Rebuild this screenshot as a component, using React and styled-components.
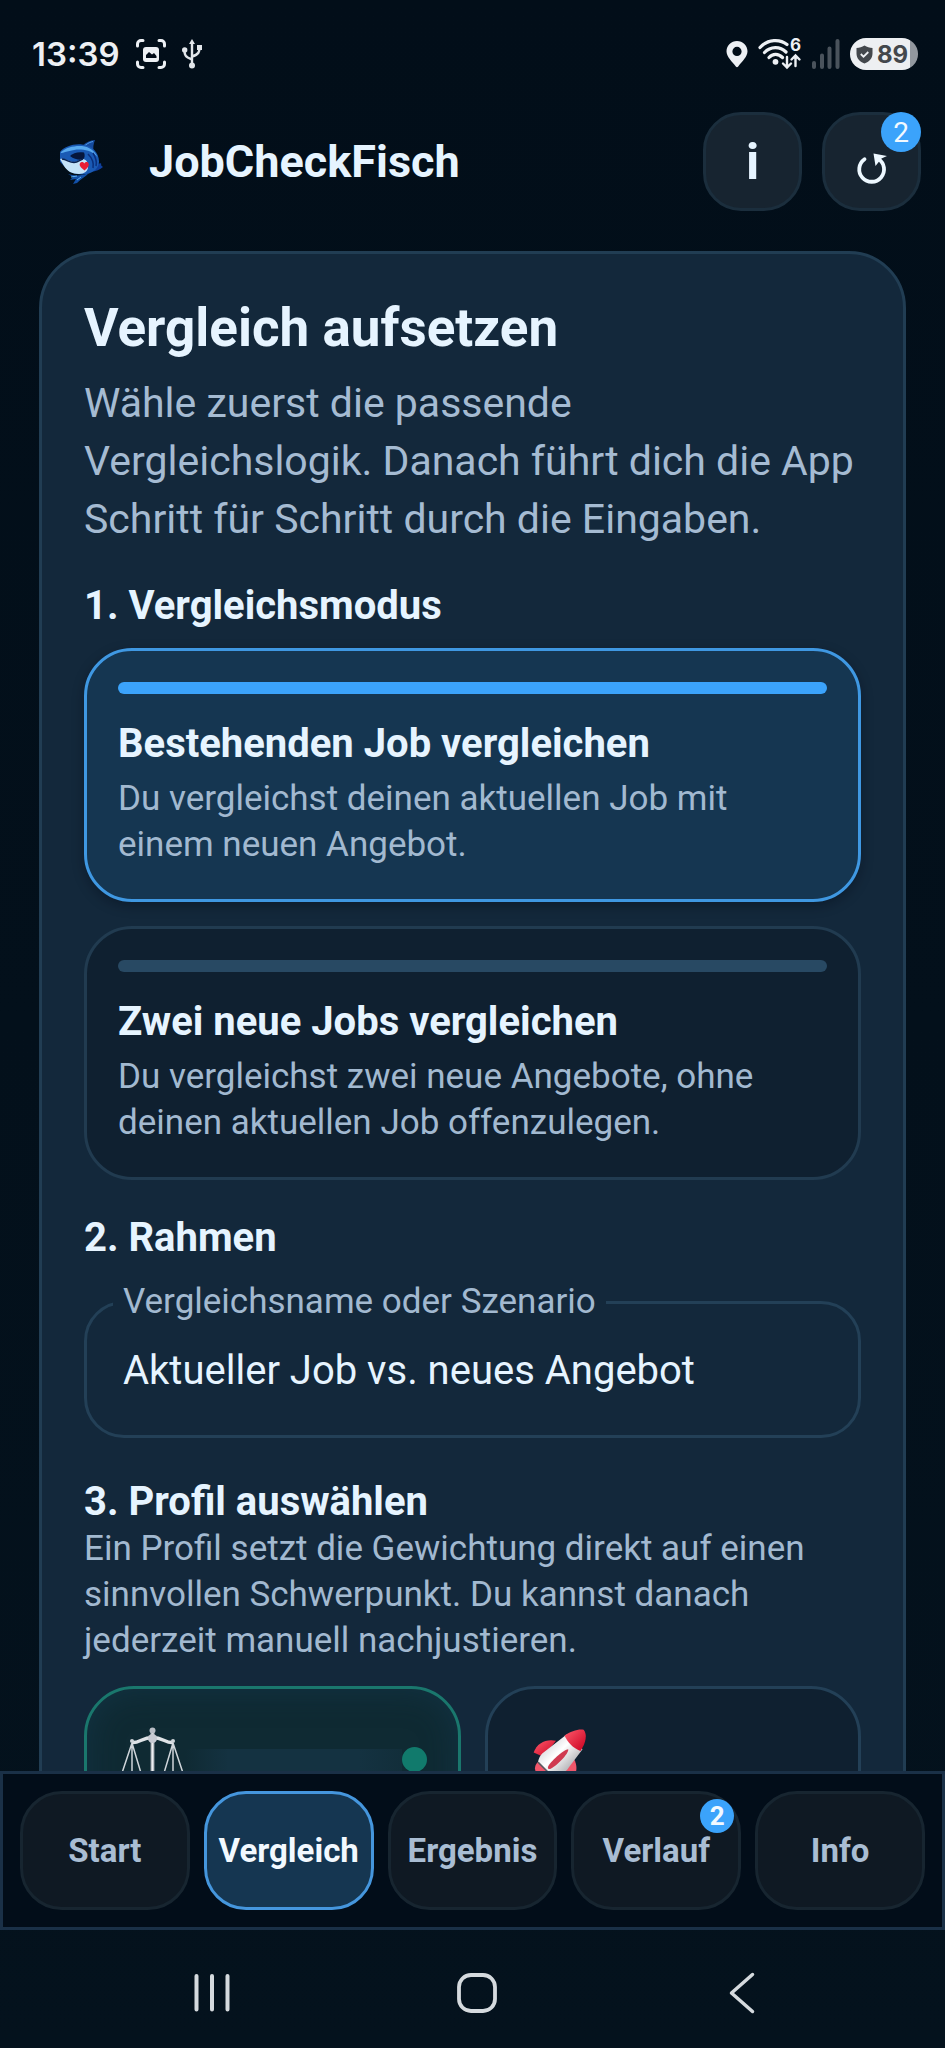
import { useState } from "react";
import styled, { createGlobalStyle } from "styled-components";

const GlobalStyle = createGlobalStyle`
* {
  margin: 0;
  padding: 0;
  box-sizing: border-box;
}

body {
  background-color: #020d19;
  color: #e6f4ff;
  font-family: Roboto, "Noto Sans", sans-serif;
}

button, input {
  font-family: inherit;
  color: inherit;
}
`;

const Screen = styled.div`
  display: flex;
  flex-direction: column;
  height: 100vh;
  background: linear-gradient(#020e19, #04121d);
`;

const StatusBar = styled.div`
  display: flex;
  justify-content: space-between;
  align-items: center;
  height: 108px;
  flex: none;
  padding: 0 27px 0 32px;
  font-family: Inter, sans-serif;
  color: #edf0f4;
`;

const StatusGroup = styled.div`
  display: flex;
  align-items: center;
  gap: ${(props) => props.$gap};
`;

const Clock = styled.span`
  font-size: 33px;
  font-weight: 600;
`;

const Battery = styled.span`
  display: flex;
  align-items: center;
  justify-content: center;
  gap: 4px;
  width: 68px;
  height: 32px;
  padding-right: 4px;
  border-radius: 16px;
  background: linear-gradient(90deg, #edeff2 60px, #92989f 60px);
  color: #43474c;
  font-size: 24px;
  font-weight: 700;
`;

const Header = styled.header`
  display: flex;
  align-items: center;
  gap: 20px;
  flex: none;
  padding: 4px 24px 40px 59px;
`;

const AppName = styled.h1`
  flex: 1;
  margin-left: 25px;
  font-size: 45px;
  line-height: 56px;
  font-weight: 700;
`;

const RoundButton = styled.button`
  position: relative;
  display: flex;
  align-items: center;
  justify-content: center;
  width: 99px;
  height: 99px;
  border: 3px solid #1b2e3d;
  border-radius: 38px;
  background-color: #172430;
  font-size: 50px;
  font-weight: 700;
  cursor: pointer;
`;

const Badge = styled.span`
  position: absolute;
  top: ${(props) => (props.$small ? "5px" : "-3px")};
  right: ${(props) => (props.$small ? "4px" : "-3px")};
  display: flex;
  align-items: center;
  justify-content: center;
  width: ${(props) => (props.$small ? "34px" : "40px")};
  height: ${(props) => (props.$small ? "34px" : "40px")};
  border-radius: 50%;
  background-color: #3ba3fb;
  color: #f2f9ff;
  font-size: ${(props) => (props.$small ? "26px" : "28px")};
  font-weight: ${(props) => (props.$small ? 700 : 400)};
`;

const Content = styled.main`
  flex: 1;
  min-height: 0;
  overflow: hidden;
  padding: 0 39px;
`;

const Panel = styled.section`
  padding: 43px 42px;
  border: 3px solid #213d53;
  border-radius: 57px;
  background-color: #13283b;
`;

const Title = styled.h2`
  font-size: 53px;
  line-height: 62px;
  font-weight: 700;
`;

const Lead = styled.p`
  margin-top: 15px;
  color: #a5bbd2;
  font-size: 41px;
  line-height: 58px;
`;

const SectionTitle = styled.h3`
  margin-top: ${(props) => props.$space || "34px"};
  font-size: 40px;
  line-height: 48px;
  font-weight: 700;
`;

const Hint = styled.span`
  display: block;
  color: #a2b9d0;
  font-size: 35px;
  line-height: 46px;
`;

const OptionList = styled.div`
  display: flex;
  flex-direction: column;
  gap: 24px;
  margin-top: 18px;
`;

const OptionCard = styled.button`
  display: block;
  width: 100%;
  padding: 31px;
  border: 3px solid ${(props) => (props.$active ? "#3f98e2" : "#213b50")};
  border-radius: 48px;
  background-color: ${(props) => (props.$active ? "#153651" : "#0f2030")};
  box-shadow: ${(props) =>
    props.$active ? "0 4px 12px rgba(0, 10, 20, 0.35)" : "none"};
  text-align: left;
  cursor: pointer;
`;

const OptionBar = styled.span`
  display: block;
  height: 12px;
  border-radius: 6px;
  background-color: ${(props) => (props.$active ? "#3ba3fb" : "#284963")};
`;

const OptionTitle = styled.span`
  display: block;
  margin: 26px 0 8px;
  font-size: 40px;
  line-height: 48px;
  font-weight: 700;
`;

const Field = styled.fieldset`
  margin-top: 18px;
  padding: 0 36px 19px 26px;
  border: 3px solid #234057;
  border-radius: 40px;
`;

const FieldLabel = styled.legend`
  padding: 0 10px;
  color: #a2b9d0;
  font-size: 35px;
  line-height: 44px;
`;

const FieldInput = styled.input`
  display: block;
  width: 100%;
  height: 92px;
  padding: 0 10px;
  border: 0;
  outline: 0;
  background: none;
  font-size: 40px;
`;

const ProfileGrid = styled.div`
  display: grid;
  grid-template-columns: 1fr 1fr;
  gap: 24px;
  margin-top: 22px;
`;

const ProfileCard = styled.button`
  display: flex;
  align-items: flex-start;
  justify-content: space-between;
  height: 280px;
  padding: 38px 31px 38px 34px;
  border: 3px solid ${(props) => (props.$active ? "#1a776d" : "#234057")};
  border-radius: 50px;
  background-color: ${(props) => (props.$active ? "#0f2a33" : "#0f2030")};
  box-shadow: ${(props) =>
    props.$active ? "inset 0 0 32px rgba(22, 60, 84, 0.5)" : "none"};
  cursor: pointer;
`;

const Sheen = styled.span`
  flex: 1;
  align-self: stretch;
  margin-top: 22px;
  background: linear-gradient(90deg, #0f2a33, #143241 20%, #143241 80%, #122e3a);
`;

const Dot = styled.span`
  width: 25px;
  height: 25px;
  margin-top: 20px;
  border-radius: 50%;
  background-color: #117a6c;
`;

const TabBar = styled.nav`
  display: grid;
  grid-template-columns: repeat(5, 1fr);
  gap: 14px;
  flex: none;
  padding: 17px;
  border: 3px solid #1a3047;
  background-color: #020d19;
`;

const Tab = styled.button`
  position: relative;
  height: 119px;
  border: 3px solid ${(props) => (props.$active ? "#4596dd" : "#172530")};
  border-radius: 42px;
  background-color: ${(props) => (props.$active ? "#153651" : "#0f1923")};
  color: ${(props) => (props.$active ? "#f2f9ff" : "#a9bdd3")};
  font-size: 33px;
  font-weight: 700;
  cursor: pointer;
`;

const SystemBar = styled.div`
  display: grid;
  grid-template-columns: repeat(3, 265px);
  justify-content: center;
  justify-items: center;
  align-items: center;
  flex: none;
  height: 118px;
  padding: 8px 0 0 8px;
`;

const SystemButton = styled.button`
  display: flex;
  border: 0;
  background: none;
  cursor: pointer;
`;

const ScreenshotIcon = () => (
  <svg width="32" height="32" viewBox="0 0 32 32" fill="none" stroke="#edf0f4" strokeWidth="3" strokeLinecap="round">
    <path d="M2.500 8V6a3.500 3.500 0 0 1 3.500-3.500h2M24 2.500h2A3.500 3.500 0 0 1 29.500 6v2M29.500 24v2a3.500 3.500 0 0 1-3.500 3.500h-2M8 29.500H6A3.500 3.500 0 0 1 2.500 26v-2" />
    <rect x="8" y="9" width="16" height="15" rx="3" fill="#edf0f4" stroke="none" />
    <path d="M11 20v-3l3-3 3 2.500 2-1.500 2.500 3V20z" fill="#020c18" stroke="none" />
  </svg>
);

const UsbIcon = () => (
  <svg width="20" height="30" viewBox="1 0 20 30" fill="none" stroke="#e2e6ea" strokeWidth="2.400">
    <path d="M11 4v22M11 20.500C4 18 3.500 16 3.500 11M11 17.500c7-2 7.500-5 7.500-9" />
    <path d="M11 0l3 5H8z" fill="#e2e6ea" stroke="none" />
    <circle cx="3.700" cy="11" r="2.700" fill="#e2e6ea" stroke="none" />
    <rect x="16" y="6" width="5" height="5" fill="#e2e6ea" stroke="none" />
    <circle cx="11" cy="26.500" r="3" fill="#e2e6ea" stroke="none" />
  </svg>
);

const PinIcon = () => (
  <svg width="22" height="28" viewBox="0 0 22 28">
    <path fillRule="evenodd" fill="#edf0f4" d="M11 1C5.300 1 .5 5.500.5 11.300.5 17 6 21.500 9.800 26.500q1.200 1.400 2.400 0C16 21.500 21.500 17 21.500 11.300 21.500 5.500 16.700 1 11 1zm0 5.800a4.600 4.600 0 1 1 0 9.200 4.600 4.600 0 0 1 0-9.200z" />
  </svg>
);

const WifiIcon = () => (
  <svg width="44" height="48" viewBox="0 -8 44 48" fill="none" stroke="#edf0f4" strokeWidth="3.200" strokeLinecap="round">
    <path d="M2 9.500C10 .8 22 .8 29 6.500M6.500 14.500c6-6.500 15.500-6.500 21.500-.5M11 19.500c4-4.500 9.500-4 13.500 0" />
    <circle cx="17.500" cy="23.800" r="2.900" fill="#edf0f4" stroke="none" />
    <path d="M29 19v9M25 25.500l4 4 4-4M37.500 28v-9M33.500 21.500l4-4 4 4" strokeWidth="2.400" />
    <text x="32" y="13" fill="#edf0f4" stroke="none" fontSize="17" fontWeight="700">6</text>
  </svg>
);

const SignalIcon = () => (
  <svg width="28" height="30" viewBox="0 0 28 30" stroke="#4a535c" strokeWidth="4" strokeLinecap="round">
    <path d="M2 24v4M10 16.500V28M17.500 9.500V28M25.500 2v26" />
  </svg>
);

const ShieldIcon = () => (
  <svg width="17" height="19" viewBox="0 0 17 19">
    <path d="M8.500.5c2.500 1.600 5 2.300 8 2.500v5.500c0 5-3.500 8.500-8 10-4.500-1.500-8-5-8-10V3c3-.2 5.500-.9 8-2.500z" fill="#43474c" />
    <path d="M4.800 9l2.700 2.700 4.800-4.700" fill="none" stroke="#edeff2" strokeWidth="1.800" />
  </svg>
);

const SharkLogo = () => (
  <svg width="45" height="46" viewBox="0 0 45 46">
    <path d="M23 7C27 3 31 1.500 36 1c-1.500 4-2.500 8-1 12z" fill="#154a9c" />
    <path d="M26 6.500c3-2.500 5.500-3.500 8-4" stroke="#4f9be8" strokeWidth="1" fill="none" />
    <path d="M35 27c4-1.500 6-3.500 7-2.500.8 1-1 1.500 2 3.500-3 2.500-8 5-13 4.500z" fill="#0f3f9c" />
    <path d="M1 13c4-5 13-8.500 22-7.500 10 1 17 8 17 17 0 6-5 11-12 12.500-8 1.500-17-.5-22-7-3-4-5.500-4-5-7.500z" fill="#1a5ab4" />
    <path d="M2 13c5-4.500 13-6.500 21-6 8 .8 13 5.500 15.500 11C34 13 29 11 22 10.500 14 10 8 13 2 14z" fill="#57a9ee" />
    <path d="M11 17c3-3 8-4.500 14-3.500 1 2.500 1 5-1 7-4 .5-9 0-13-3.500z" fill="#06163c" />
    <path d="M1 20c5-1.500 8 2.500 13 3 3.500.2 6-1.500 9-3 5 0 6 4 6 8 0 4-3.500 7-9 7-7 0-12-3-15-8z" fill="#c4e3f8" />
    <path d="M3 20c5 .5 7 3.500 12 3.500 4 0 6.500-3 9-3.500" fill="none" stroke="#0b2350" strokeWidth="1.300" />
    <path d="M25.500 31.500c-4-3-5.500-5-4.500-7.200 1-1.700 3.200-1.500 4.300.2 1.200-1.800 3.500-1.900 4.300 0 .8 2.200-.6 4.300-4.100 7z" fill="#ea1c34" />
    <path d="M29 15c4 4 6 9 5 14M34 14c3 5 4 9 3 13" stroke="#0a2f7c" strokeWidth="1.500" fill="none" />
    <path d="M9 35c6 2 14 2 21-1-4 4-8 6-12 10l-4 1 3-5-6 1 3-3z" fill="#1250a8" />
    <path d="M12 38l6-1M18 41l4-3" stroke="#5fb0ee" strokeWidth="1" />
  </svg>
);

const RestoreIcon = () => (
  <svg width="34" height="46" viewBox="0 -12 34 46" fill="none" stroke="#edf8ff" strokeWidth="3.800">
    <path d="M9.500 8.200A12.400 12.400 0 1 0 23.500 8" strokeLinecap="round" />
    <path d="M18.500 2.500l13.500 2.500-5.500 2.500L20.500 15z" fill="#edf8ff" stroke="none" />
  </svg>
);

const ScalesIcon = () => (
  <svg width="64" height="64" viewBox="0 0 64 64" fill="none" stroke="#cfd5da" strokeWidth="1.500">
    <defs>
      <linearGradient id="metal">
        <stop offset="0" stopColor="#8f979e" />
        <stop offset="0.500" stopColor="#eef0f2" />
        <stop offset="1" stopColor="#8f979e" />
      </linearGradient>
    </defs>
    <path d="M11 16L1 46M11 16v30M11 16l9 30M52 16l-9 30M52 16v30M52 16l10 30" />
    <path d="M11 15.500c7 1 10-5 20.500-5s13.500 6 20.500 5" stroke="#dfe3e7" strokeWidth="3.500" />
    <rect x="29.500" y="6" width="4" height="54" fill="url(#metal)" stroke="none" />
    <circle cx="31.500" cy="3.500" r="3" fill="#b9bec6" stroke="none" />
    <circle cx="31.500" cy="11.500" r="4.500" fill="#c7cad2" stroke="none" />
    <circle cx="11" cy="14" r="2" fill="#cfd5da" stroke="none" />
    <circle cx="52" cy="14" r="2" fill="#cfd5da" stroke="none" />
    <path d="M1 46c2 8 18 8 20 0zM42 46c2 8 18 8 20 0zM20 62h24" fill="#b9bec6" />
  </svg>
);

const RocketIcon = () => (
  <svg width="68" height="68" viewBox="-4 -1 64 64">
    <defs>
      <linearGradient id="hull" x1="0.200" y1="0.200" x2="0.800" y2="0.800">
        <stop offset="0" stopColor="#d8d8dc" />
        <stop offset="0.400" stopColor="#ffffff" />
        <stop offset="1" stopColor="#a9a9ad" />
      </linearGradient>
      <linearGradient id="cone" x1="0" y1="0" x2="1" y2="1">
        <stop offset="0" stopColor="#ff5a6c" />
        <stop offset="1" stopColor="#c9001f" />
      </linearGradient>
    </defs>
    <path d="M28 12c-9-2-18 2-21 11l9 4z" fill="url(#cone)" />
    <path d="M45 29c4 8 3 16-6 22l-5-9z" fill="#f0566a" />
    <path d="M11 32c-5 5-3 11 4 15l8-7z" fill="#f0566a" />
    <path d="M38 6L15 24c-2 2-3 4-4 8l15 15c6-3 11-5 14-10l13-17z" fill="url(#hull)" />
    <path d="M36 7c6-4 13-6.500 18-5.500 3.500 4 2.500 12-3 20C44 19 39 13.500 36 7z" fill="url(#cone)" />
    <path d="M39.500 20c1 4-12 17-17 18.500-1.500.5-2.500-1-2-2.200C23 32 34 21 39.500 20z" fill="#d03a50" />
    <path d="M11 32l15 15" stroke="#5a5a60" strokeWidth="1.500" />
  </svg>
);

const RecentsIcon = () => (
  <svg width="36" height="40" viewBox="0 0 36 40" stroke="#d5dade" strokeWidth="4" strokeLinecap="round">
    <path d="M2.500 3v33.500M18 3v33.500M33.500 3v33.500" />
  </svg>
);

const HomeIcon = () => (
  <svg width="42" height="42" viewBox="0 0 42 42" fill="none" stroke="#d5dade" strokeWidth="3.800">
    <rect x="3" y="3" width="36" height="36" rx="12" />
  </svg>
);

const BackIcon = () => (
  <svg width="26" height="42" viewBox="0 0 26 42" fill="none" stroke="#d5dade" strokeWidth="3.500" strokeLinecap="round" strokeLinejoin="round">
    <path d="M23.500 2.500L2.500 21l21 18.500" />
  </svg>
);

const options = [
  {
    id: "bestehend",
    title: "Bestehenden Job vergleichen",
    text: "Du vergleichst deinen aktuellen Job mit einem neuen Angebot.",
  },
  {
    id: "neu",
    title: "Zwei neue Jobs vergleichen",
    text: "Du vergleichst zwei neue Angebote, ohne deinen aktuellen Job offenzulegen.",
  },
];

const tabs = ["Start", "Vergleich", "Ergebnis", "Verlauf", "Info"];

export default function App() {
  const [mode, setMode] = useState("bestehend");
  const [name, setName] = useState("Aktueller Job vs. neues Angebot");
  const [profile, setProfile] = useState("balance");
  const [tab, setTab] = useState("Vergleich");

  return (
    <Screen>
      <GlobalStyle />
      <StatusBar>
        <StatusGroup $gap="15px">
          <Clock>13:39</Clock>
          <ScreenshotIcon />
          <UsbIcon />
        </StatusGroup>
        <StatusGroup $gap="10px">
          <PinIcon />
          <WifiIcon />
          <SignalIcon />
          <Battery>
            <ShieldIcon />
            89
          </Battery>
        </StatusGroup>
      </StatusBar>

      <Header>
        <SharkLogo />
        <AppName>JobCheckFisch</AppName>
        <RoundButton aria-label="Hilfe">i</RoundButton>
        <RoundButton aria-label="Wiederherstellen">
          <RestoreIcon />
          <Badge>2</Badge>
        </RoundButton>
      </Header>

      <Content>
        <Panel>
          <Title>Vergleich aufsetzen</Title>
          <Lead>
            Wähle zuerst die passende Vergleichslogik. Danach führt dich die App
            Schritt für Schritt durch die Eingaben.
          </Lead>

          <SectionTitle>1. Vergleichsmodus</SectionTitle>
          <OptionList>
            {options.map((option) => (
              <OptionCard
                key={option.id}
                $active={mode === option.id}
                aria-pressed={mode === option.id}
                onClick={() => setMode(option.id)}
              >
                <OptionBar $active={mode === option.id} />
                <OptionTitle>{option.title}</OptionTitle>
                <Hint>{option.text}</Hint>
              </OptionCard>
            ))}
          </OptionList>

          <SectionTitle>2. Rahmen</SectionTitle>
          <Field>
            <FieldLabel>
              <label htmlFor="szenario">Vergleichsname oder Szenario</label>
            </FieldLabel>
            <FieldInput
              id="szenario"
              type="text"
              value={name}
              onChange={(e) => setName(e.target.value)}
            />
          </Field>

          <SectionTitle $space="40px">3. Profil auswählen</SectionTitle>
          <Hint>
            Ein Profil setzt die Gewichtung direkt auf einen sinnvollen
            Schwerpunkt. Du kannst danach jederzeit manuell nachjustieren.
          </Hint>
          <ProfileGrid>
            <ProfileCard
              aria-label="Balance"
              $active={profile === "balance"}
              onClick={() => setProfile("balance")}
            >
              <ScalesIcon />
              {profile === "balance" && (
                <>
                  <Sheen />
                  <Dot />
                </>
              )}
            </ProfileCard>
            <ProfileCard
              aria-label="Karriere"
              $active={profile === "karriere"}
              onClick={() => setProfile("karriere")}
            >
              <RocketIcon />
              {profile === "karriere" && (
                <>
                  <Sheen />
                  <Dot />
                </>
              )}
            </ProfileCard>
          </ProfileGrid>
        </Panel>
      </Content>

      <TabBar>
        {tabs.map((item) => (
          <Tab key={item} $active={tab === item} onClick={() => setTab(item)}>
            {item}
            {item === "Verlauf" && <Badge $small>2</Badge>}
          </Tab>
        ))}
      </TabBar>

      <SystemBar>
        <SystemButton aria-label="Letzte Apps">
          <RecentsIcon />
        </SystemButton>
        <SystemButton aria-label="Startbildschirm">
          <HomeIcon />
        </SystemButton>
        <SystemButton aria-label="Zurück">
          <BackIcon />
        </SystemButton>
      </SystemBar>
    </Screen>
  );
}
